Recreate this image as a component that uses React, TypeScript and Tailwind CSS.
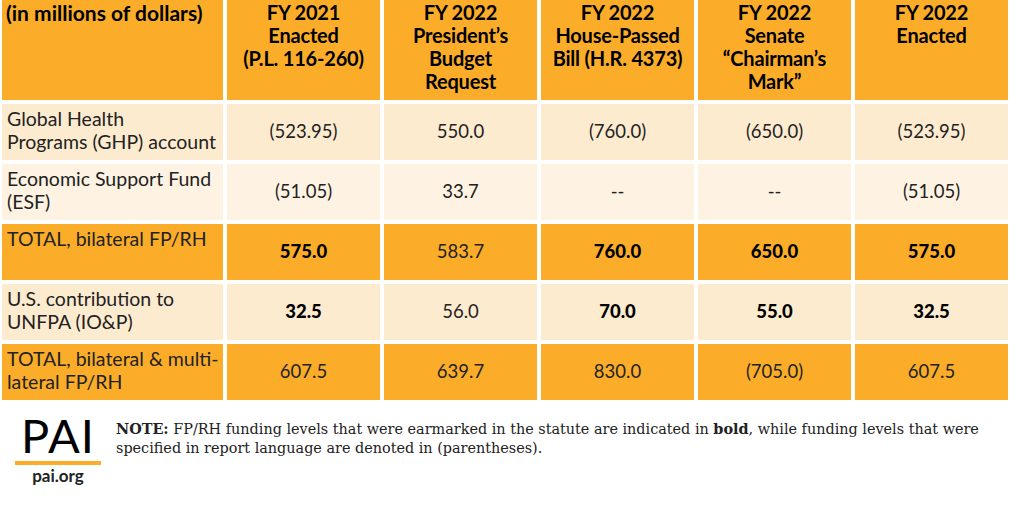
const columns = [
  ["FY 2021", "Enacted", "(P.L. 116-260)"],
  ["FY 2022", "President’s", "Budget", "Request"],
  ["FY 2022", "House-Passed", "Bill (H.R. 4373)"],
  ["FY 2022", "Senate", "“Chairman’s", "Mark”"],
  ["FY 2022", "Enacted"],
];

type Row = { label: string[]; values: { v: string; bold?: boolean }[]; tone: "dark" | "mid" | "light" };

const rows: Row[] = [
  {
    label: ["Global Health", "Programs (GHP) account"],
    tone: "mid",
    values: [{ v: "(523.95)" }, { v: "550.0" }, { v: "(760.0)" }, { v: "(650.0)" }, { v: "(523.95)" }],
  },
  {
    label: ["Economic Support Fund", "(ESF)"],
    tone: "light",
    values: [{ v: "(51.05)" }, { v: "33.7" }, { v: "--" }, { v: "--" }, { v: "(51.05)" }],
  },
  {
    label: ["TOTAL, bilateral FP/RH"],
    tone: "dark",
    values: [
      { v: "575.0", bold: true },
      { v: "583.7" },
      { v: "760.0", bold: true },
      { v: "650.0", bold: true },
      { v: "575.0", bold: true },
    ],
  },
  {
    label: ["U.S. contribution to", "UNFPA (IO&P)"],
    tone: "mid",
    values: [
      { v: "32.5", bold: true },
      { v: "56.0" },
      { v: "70.0", bold: true },
      { v: "55.0", bold: true },
      { v: "32.5", bold: true },
    ],
  },
  {
    label: ["TOTAL, bilateral & multi-", "lateral FP/RH"],
    tone: "dark",
    values: [{ v: "607.5" }, { v: "639.7" }, { v: "830.0" }, { v: "(705.0)" }, { v: "607.5" }],
  },
];

const toneBg = {
  dark: "bg-[#fbad29]",
  mid: "bg-[#fdebd0]",
  light: "bg-[#fef3e3]",
};

export default function App() {
  return (
    <div className="w-[1024px] h-[512px] bg-white overflow-hidden font-['Lato',sans-serif] text-[#1c1c1c]">
      <div className="pl-[2px] grid grid-cols-[221px_repeat(5,153px)] grid-rows-[100px_repeat(5,56px)] gap-[4px]">
        <div className="bg-[#fbad29] pl-[4px] pt-[1px] text-[21px] leading-[23px] font-bold text-black">
          (in millions of dollars)
        </div>
        {columns.map((lines, i) => (
          <div key={i} className="bg-[#fbad29] pt-[1px] text-center text-[20px] leading-[23px] font-bold text-black tracking-[-0.2px]">
            {lines.map((l) => (
              <div key={l}>{l}</div>
            ))}
          </div>
        ))}

        {rows.map((row, r) => (
          <>
            <div key={`l${r}`} className={`${toneBg[row.tone]} pl-[5px] pt-[3px] text-[19.5px] leading-[23px] text-[#222]`}>
              {row.label.map((l) => (
                <div key={l}>{l}</div>
              ))}
            </div>
            {row.values.map((c, j) => (
              <div
                key={`v${r}-${j}`}
                className={`${toneBg[row.tone]} flex items-center justify-center text-[18.5px] ${c.bold ? "font-black text-black" : "font-normal text-[#222]"}`}
              >
                {c.v}
              </div>
            ))}
          </>
        ))}
      </div>

      <div className="flex mt-[13px]">
        <div className="w-[86px] ml-[15px] flex flex-col items-center">
          <div className="text-[47px] leading-[44px] font-normal text-black tracking-[1px]">PAI</div>
          <div className="w-[86px] h-[4px] bg-[#fbad29] mt-[4px]"></div>
          <div className="text-[17px] leading-[20px] font-bold text-[#222] mt-[1px]">pai.org</div>
        </div>
        <div className="ml-[15px] mt-[6px] font-['DejaVu_Serif',serif] text-[14.4px] leading-[19px] text-[#222]">
          <div className="whitespace-nowrap">
            <b>NOTE:</b> FP/RH funding levels that were earmarked in the statute are indicated in <b>bold</b>, while funding levels that were
          </div>
          <div className="whitespace-nowrap">specified in report language are denoted in (parentheses).</div>
        </div>
      </div>
    </div>
  );
}
